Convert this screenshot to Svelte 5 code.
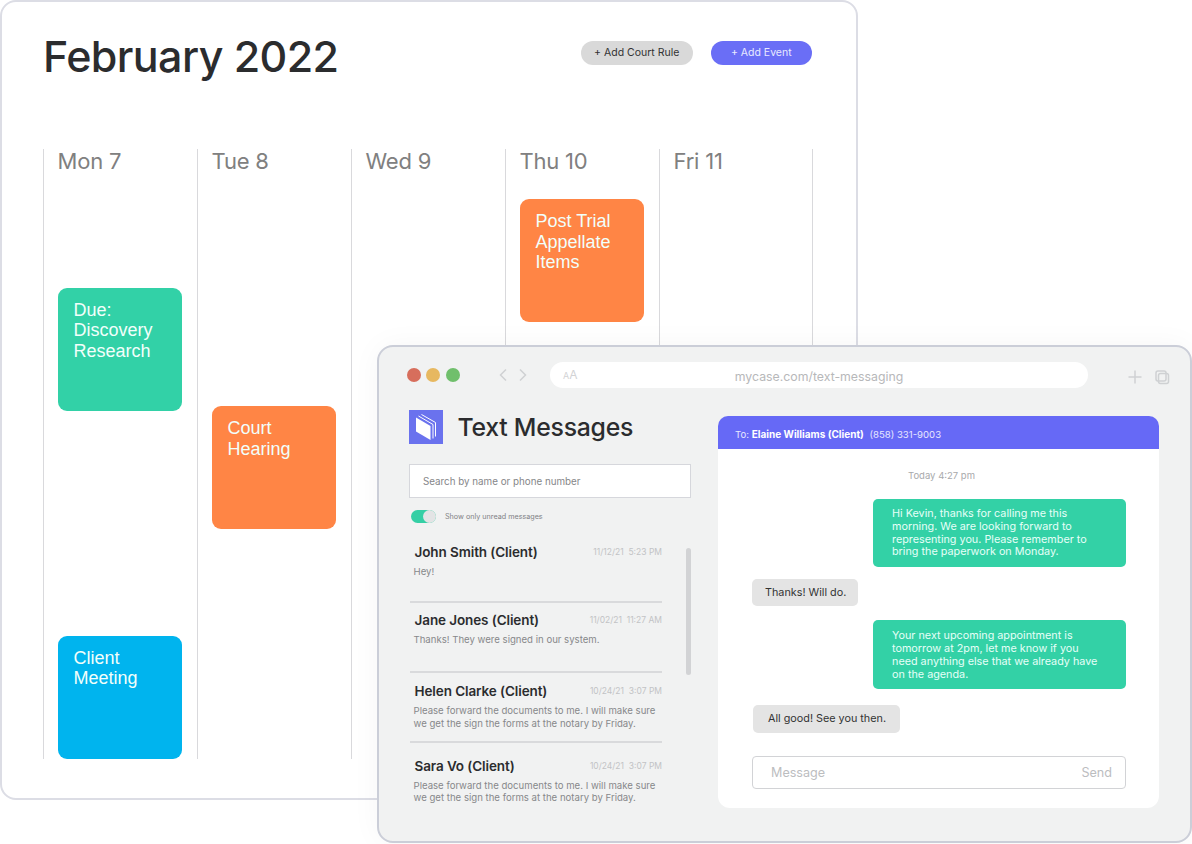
<script lang="ts">
  const days = [
    { label: 'Mon 7', events: [
      { title: 'Due:\nDiscovery\nResearch', color: 'green', gap: 113.5 },
      { title: 'Client\nMeeting', color: 'blue', gap: 225 }
    ] },
    { label: 'Tue 8', events: [{ title: 'Court\nHearing', color: 'orange', gap: 232 }] },
    { label: 'Wed 9', events: [] },
    { label: 'Thu 10', events: [{ title: 'Post Trial\nAppellate\nItems', color: 'orange', gap: 25 }] },
    { label: 'Fri 11', events: [] }
  ];

  const threads = [
    { name: 'John Smith (Client)', date: '11/12/21  5:23 PM', text: 'Hey!' },
    { name: 'Jane Jones (Client)', date: '11/02/21  11:27 AM', text: 'Thanks! They were signed in our system.' },
    { name: 'Helen Clarke (Client)', date: '10/24/21  3:07 PM', text: 'Please forward the documents to me. I will make sure\nwe get the sign the forms at the notary by Friday.' },
    { name: 'Sara Vo (Client)', date: '10/24/21  3:07 PM', text: 'Please forward the documents to me. I will make sure\nwe get the sign the forms at the notary by Friday.' }
  ];
</script>

<div class="stage">
  <section class="calendar">
    <header class="cal-head">
      <h1>February 2022</h1>
      <div class="actions">
        <button class="pill grey">+ Add Court Rule</button>
        <button class="pill purple">+ Add Event</button>
      </div>
    </header>
    <div class="days">
      {#each days as day}
        <div class="day">
          <h2>{day.label}</h2>
          {#each day.events as ev}
            <div class="event {ev.color}" style="margin-top: {ev.gap}px">{ev.title}</div>
          {/each}
        </div>
      {/each}
    </div>
  </section>

  <section class="browser">
    <div class="chrome">
      <div class="dots">
        <span class="dot red"></span>
        <span class="dot yellow"></span>
        <span class="dot lime"></span>
      </div>
      <div class="nav">
        <svg class="line" width="10" height="14" viewBox="0 0 10 14"><path d="M8 1.5 2.5 7 8 12.5" /></svg>
        <svg class="line" width="10" height="14" viewBox="0 0 10 14"><path d="M2 1.5 7.5 7 2 12.5" /></svg>
      </div>
      <div class="url">
        <span class="aa"><small>A</small>A</span>
        <span class="addr">mycase.com/text-messaging</span>
      </div>
      <div class="tools">
        <svg class="line" width="16" height="16" viewBox="0 0 16 16"><path d="M8 1.5v13M1.5 8h13" /></svg>
        <svg class="line" width="15" height="15" viewBox="0 0 15 15"><rect x="1" y="1" width="10" height="10" rx="2" /><rect x="3.5" y="3.5" width="10" height="10" rx="2" /></svg>
      </div>
    </div>

    <div class="body">
      <aside class="left">
        <div class="brand">
          <svg width="34" height="34" viewBox="0 0 34 34">
            <rect width="34" height="34" fill="#6a72ee" />
            <path d="M7 7.5 21.5 16v14L7 21.5Z" fill="#fff" />
            <path d="M9.5 6 24 14.500v14M12.500 4.500 26.500 12.500v14" fill="none" stroke="#fff" stroke-width="1" />
          </svg>
          <h3>Text Messages</h3>
        </div>
        <div class="search">Search by name or phone number</div>
        <div class="toggle-row">
          <span class="toggle"><span class="knob"></span></span>
          <span class="toggle-label">Show only unread messages</span>
        </div>
        <div class="list-wrap">
          <ul class="threads">
            {#each threads as t}
              <li>
                <div class="row">
                  <strong>{t.name}</strong>
                  <time>{t.date}</time>
                </div>
                <p>{t.text}</p>
              </li>
            {/each}
          </ul>
          <div class="scrollbar"></div>
        </div>
      </aside>

      <div class="chat">
        <div class="to">To: <b>Elaine Williams (Client)</b> <span>(858) 331-9003</span></div>
        <div class="conversation">
          <div class="stamp">Today 4:27 pm</div>
          <div class="bubble out">Hi Kevin, thanks for calling me this morning. We are looking forward to representing you. Please remember to bring the paperwork on Monday.</div>
          <div class="bubble in first">Thanks! Will do.</div>
          <div class="bubble out second">Your next upcoming appointment is tomorrow at 2pm, let me know if you need anything else that we already have on the agenda.</div>
          <div class="bubble in last">All good! See you then.</div>
          <div class="composer">
            <span>Message</span>
            <span>Send</span>
          </div>
        </div>
      </div>
    </div>
  </section>
</div>

<style>
  :global(body) {
    margin: 0;
    background: #fff;
  }

  .stage {
    position: relative;
    width: 1192px;
    height: 844px;
    overflow: hidden;
    font-family: Inter, "Liberation Sans", sans-serif;
    color: #2b2c2e;
  }

  /* the two windows overlap like on a desktop */
  .calendar {
    position: absolute;
    left: 0;
    top: 0;
    box-sizing: border-box;
    width: 858px;
    height: 800px;
    background: #fff;
    border: 2px solid #dcdde5;
    border-radius: 16px;
    padding: 0 44px 0 41px;
  }

  .cal-head {
    display: flex;
    justify-content: space-between;
    align-items: center;
    height: 106px;
  }

  h1 {
    margin: 2px 0 0;
    font-size: 43px;
    line-height: 52px;
    font-weight: 500;
    letter-spacing: -0.6px;
  }

  .actions {
    display: flex;
    gap: 17.5px;
    margin-top: -5px;
  }

  .pill {
    height: 24px;
    padding: 0;
    border: 0;
    border-radius: 12px;
    font: 400 10.5px Inter, sans-serif;
  }

  .pill.grey {
    width: 112.5px;
    background: #d9d9d9;
    color: #333;
  }

  .pill.purple {
    width: 101.5px;
    background: #6a6ef6;
    color: #e8e9ff;
  }

  .days {
    display: grid;
    grid-template-columns: repeat(5, 154px);
    box-sizing: border-box;
    width: 770px;
    height: 609px;
    margin-top: 41px;
    border-right: 1px solid #d9d9dc;
  }

  .day {
    box-sizing: border-box;
    border-left: 1.5px solid #d9d9dc;
    padding-left: 13.5px;
  }

  h2 {
    margin: 0;
    font-size: 22px;
    line-height: 25px;
    font-weight: 400;
    letter-spacing: -0.2px;
    color: #808080;
  }

  .event {
    box-sizing: border-box;
    width: 124px;
    height: 123px;
    border-radius: 9px;
    padding: 12.4px 15px 0 16px;
    font-family: "Liberation Sans", sans-serif;
    font-size: 18px;
    line-height: 20.5px;
    color: #f2fffb;
    white-space: pre-line;
  }

  .green { background: #32d1a7; }
  .blue { background: #00b4ee; }
  .orange { background: #ff8545; }

  .browser {
    position: absolute;
    left: 377px;
    top: 345px;
    box-sizing: border-box;
    width: 815px;
    height: 498px;
    background: #f1f2f2;
    border: 2px solid #cbced8;
    border-radius: 16px;
    box-shadow: 0 0 30px rgba(30, 30, 60, 0.04);
    padding: 15px 21px 0 30px;
  }

  .chrome {
    display: flex;
    align-items: center;
    height: 26px;
  }

  .dots {
    display: flex;
    flex: none;
    gap: 5.3px;
    width: 91px;
    margin-left: -2px;
  }

  .dot {
    width: 14px;
    height: 14px;
    border-radius: 50%;
  }

  .red { background: #d76e5c; }
  .yellow { background: #e7b860; }
  .lime { background: #70bf6c; }

  .nav {
    display: flex;
    flex: none;
    gap: 10px;
    width: 52px;
  }

  .line path, .line rect {
    fill: none;
    stroke: #cfd1d3;
    stroke-width: 1.5;
  }

  .url {
    position: relative;
    flex: none;
    box-sizing: border-box;
    width: 538px;
    height: 26px;
    padding-top: 2px;
    border-radius: 13px;
    background: #fff;
    display: flex;
    align-items: center;
    justify-content: center;
  }

  .aa {
    position: absolute;
    left: 13px;
    top: 5px;
    font-size: 12px;
    color: #d2d3d5;
  }

  .aa small {
    font-size: 9px;
  }

  .addr {
    font-size: 12.3px;
    color: #b7b8ba;
  }

  .tools {
    display: flex;
    flex: none;
    align-items: center;
    gap: 12px;
    margin-left: 39px;
    margin-top: 4px;
  }

  .body {
    display: flex;
    margin-top: 22px;
  }

  .left {
    width: 282px;
    margin-right: 27px;
  }

  .brand {
    display: flex;
    align-items: center;
    gap: 14.5px;
    height: 34px;
  }

  h3 {
    margin: 0;
    font-size: 24.8px;
    font-weight: 500;
    letter-spacing: -0.25px;
  }

  .search {
    box-sizing: border-box;
    height: 34px;
    margin-top: 20px;
    padding-left: 13px;
    background: #fff;
    border: 1.5px solid #d6d7dc;
    font-size: 9.8px;
    line-height: 33px;
    color: #858688;
  }

  .toggle-row {
    display: flex;
    align-items: center;
    margin-top: 12px;
    height: 13px;
    padding-left: 2px;
    gap: 9px;
  }

  .toggle {
    position: relative;
    width: 25px;
    height: 13px;
    border-radius: 7px;
    background: #35cfa5;
  }

  .knob {
    position: absolute;
    right: 0;
    top: 0;
    width: 13px;
    height: 13px;
    border-radius: 50%;
    background: #e3e4e5;
  }

  .toggle-label {
    font-size: 7.2px;
    color: #808184;
  }

  .list-wrap {
    position: relative;
    margin-top: 20px;
  }

  .threads {
    list-style: none;
    width: 252px;
    margin: 0 0 0 1px;
    padding: 0;
  }

  li {
    box-sizing: border-box;
    height: 59.5px;
    padding-left: 4.5px;
    border-bottom: 2px solid #d9dadc;
  }

  li:nth-child(2) { height: 70px; padding-top: 8.5px; }
  li:nth-child(3) { height: 70.5px; padding-top: 9.5px; }
  li:nth-child(4) { border-bottom: 0; padding-top: 13.5px; }

  .row {
    display: flex;
    justify-content: space-between;
    align-items: center;
    height: 18px;
  }

  strong {
    font-size: 13.5px;
    font-weight: 600;
    letter-spacing: -0.1px;
  }

  time {
    font-size: 8.5px;
    color: #c2c3c5;
    white-space: pre;
  }

  li p {
    margin: 5px 0 0 -1px;
    font-size: 9.6px;
    line-height: 12.5px;
    color: #87888a;
    white-space: pre-line;
  }

  .scrollbar {
    position: absolute;
    right: 0;
    top: 5px;
    width: 5px;
    height: 127px;
    border-radius: 3px;
    background: #d2d3d5;
  }

  .chat {
    width: 441px;
    margin-top: 6px;
  }

  .to {
    box-sizing: border-box;
    height: 33px;
    padding-left: 17px;
    border-radius: 10px 10px 0 0;
    background: #6669f6;
    color: #e6e7ff;
    font-size: 9.6px;
    line-height: 36px;
    white-space: pre-wrap;
  }

  .to b {
    color: #fff;
    font-size: 10px;
    font-weight: 700;
  }

  .to span {
    margin-left: 3px;
  }

  .conversation {
    display: flex;
    flex-direction: column;
    box-sizing: border-box;
    height: 359px;
    padding: 20px 33px 0 34px;
    background: #fff;
    border-radius: 0 0 12px 12px;
  }

  .stamp {
    margin-left: 5px;
    text-align: center;
    font-size: 9.5px;
    line-height: 14px;
    color: #a8a9ab;
  }

  .bubble {
    box-sizing: border-box;
    border-radius: 5px;
    font-size: 10.8px;
    line-height: 12.8px;
  }

  .bubble.out {
    align-self: flex-end;
    width: 253px;
    height: 68.3px;
    margin-top: 16px;
    padding: 9px 24px 0 19px;
    background: #33d1a6;
    color: #e6fff8;
  }

  .bubble.second {
    margin-top: 14.5px;
    padding-top: 10px;
  }

  .bubble.in {
    align-self: flex-start;
    background: #e4e4e4;
    color: #333;
  }

  .first {
    width: 106px;
    height: 26.5px;
    margin-top: 12px;
    padding: 8px 0 0 13px;
  }

  .last {
    width: 147px;
    height: 28px;
    margin: 16.5px 0 0 1px;
    padding: 8px 0 0 15px;
  }

  .composer {
    display: flex;
    justify-content: space-between;
    box-sizing: border-box;
    height: 32.5px;
    margin-top: 23px;
    padding: 0 13px 0 18px;
    border: 1px solid #d2d3d6;
    border-radius: 4px;
    font-size: 12.6px;
    line-height: 31px;
    color: #bcbdbf;
  }
</style>
